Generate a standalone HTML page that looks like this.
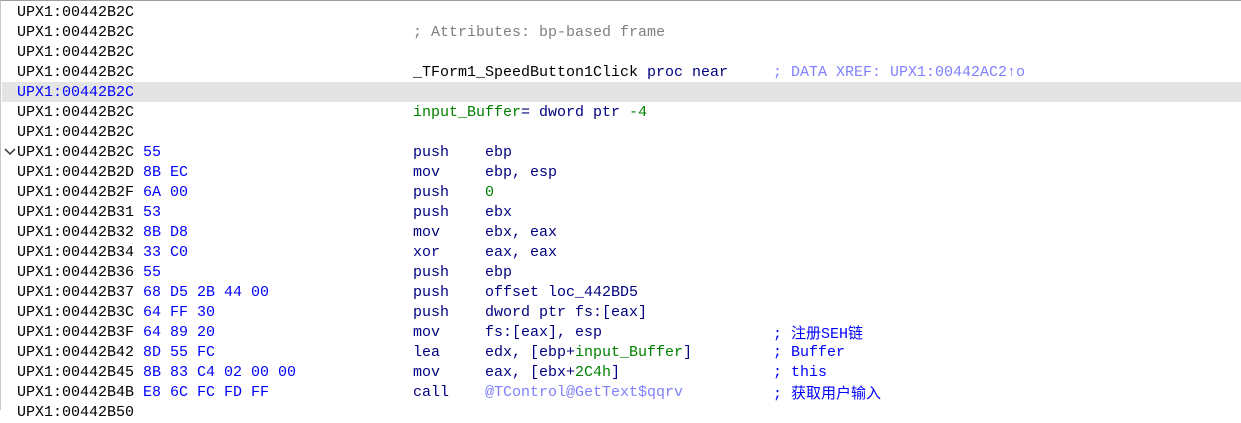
<!DOCTYPE html><html><head><style>
body{margin:0;width:1241px;height:410px;overflow:hidden;background:#fff;font-family:"Liberation Mono","Noto Sans CJK SC",monospace;font-size:15px;}
#w{position:absolute;left:0;top:0;width:1241px;height:410px;border-top:1px solid #a0a0a0;border-left:1px solid #c8c8c8;box-sizing:border-box}
.r{position:absolute;left:0;width:1240px;height:20px;line-height:20px;white-space:pre;color:#000}
.r span{position:absolute;top:1px;height:20px;line-height:20px}
.a{left:16px}.y{left:142px;color:#0000ff}.i{left:412px;color:#000080}.o{left:484px;color:#000080}.m{left:772px;color:#0000ff}
.hl{position:absolute;left:1px;top:81px;width:1240px;height:20px;background:#e4e4e4}
.g{color:#008000}.c{color:#808080}.x{color:#8080ff}.p{color:#8080ff}
.r span span{position:static}
.cn{font-family:"Noto Sans CJK SC",sans-serif;font-size:15px;line-height:20px}
</style></head><body><div id="w">
<div class="hl"></div>
<div class="r" style="top:1px"><span class="a">UPX1:00442B2C</span></div>
<div class="r" style="top:21px"><span class="a">UPX1:00442B2C</span><span class="i c">; Attributes: bp-based frame</span></div>
<div class="r" style="top:41px"><span class="a">UPX1:00442B2C</span></div>
<div class="r" style="top:61px"><span class="a">UPX1:00442B2C</span><span class="i" style="color:#000">_TForm1_SpeedButton1Click <span style="color:#000080">proc near</span></span><span class="m x">; DATA XREF: UPX1:00442AC2↑o</span></div>
<div class="r" style="top:81px"><span class="a" style="color:#0000ff">UPX1:00442B2C</span></div>
<div class="r" style="top:101px"><span class="a">UPX1:00442B2C</span><span class="i"><span class="g">input_Buffer</span>= dword ptr <span class="g">-4</span></span></div>
<div class="r" style="top:121px"><span class="a">UPX1:00442B2C</span></div>
<div class="r" style="top:141px"><span class="a">UPX1:00442B2C</span><span class="y">55</span><span class="i">push</span><span class="o">ebp</span></div>
<div class="r" style="top:161px"><span class="a">UPX1:00442B2D</span><span class="y">8B EC</span><span class="i">mov</span><span class="o">ebp, esp</span></div>
<div class="r" style="top:181px"><span class="a">UPX1:00442B2F</span><span class="y">6A 00</span><span class="i">push</span><span class="o g">0</span></div>
<div class="r" style="top:201px"><span class="a">UPX1:00442B31</span><span class="y">53</span><span class="i">push</span><span class="o">ebx</span></div>
<div class="r" style="top:221px"><span class="a">UPX1:00442B32</span><span class="y">8B D8</span><span class="i">mov</span><span class="o">ebx, eax</span></div>
<div class="r" style="top:241px"><span class="a">UPX1:00442B34</span><span class="y">33 C0</span><span class="i">xor</span><span class="o">eax, eax</span></div>
<div class="r" style="top:261px"><span class="a">UPX1:00442B36</span><span class="y">55</span><span class="i">push</span><span class="o">ebp</span></div>
<div class="r" style="top:281px"><span class="a">UPX1:00442B37</span><span class="y">68 D5 2B 44 00</span><span class="i">push</span><span class="o">offset loc_442BD5</span></div>
<div class="r" style="top:301px"><span class="a">UPX1:00442B3C</span><span class="y">64 FF 30</span><span class="i">push</span><span class="o">dword ptr fs:[eax]</span></div>
<div class="r" style="top:321px"><span class="a">UPX1:00442B3F</span><span class="y">64 89 20</span><span class="i">mov</span><span class="o">fs:[eax], esp</span><span class="m">; <span class="cn">注册</span>SEH<span class="cn">链</span></span></div>
<div class="r" style="top:341px"><span class="a">UPX1:00442B42</span><span class="y">8D 55 FC</span><span class="i">lea</span><span class="o">edx, [ebp+<span class="g">input_Buffer</span>]</span><span class="m">; Buffer</span></div>
<div class="r" style="top:361px"><span class="a">UPX1:00442B45</span><span class="y">8B 83 C4 02 00 00</span><span class="i">mov</span><span class="o">eax, [ebx+<span class="g">2C4h</span>]</span><span class="m">; this</span></div>
<div class="r" style="top:381px"><span class="a">UPX1:00442B4B</span><span class="y">E8 6C FC FD FF</span><span class="i">call</span><span class="o p">@TControl@GetText$qqrv</span><span class="m">; <span class="cn">获取用户输入</span></span></div>
<div class="r" style="top:401px"><span class="a">UPX1:00442B50</span></div>
<svg style="position:absolute;left:3px;top:147px" width="12" height="8"><path d="M1 1 L6 6 L11 1" stroke="#333" stroke-width="1.5" fill="none"/></svg>
</div></body></html>
